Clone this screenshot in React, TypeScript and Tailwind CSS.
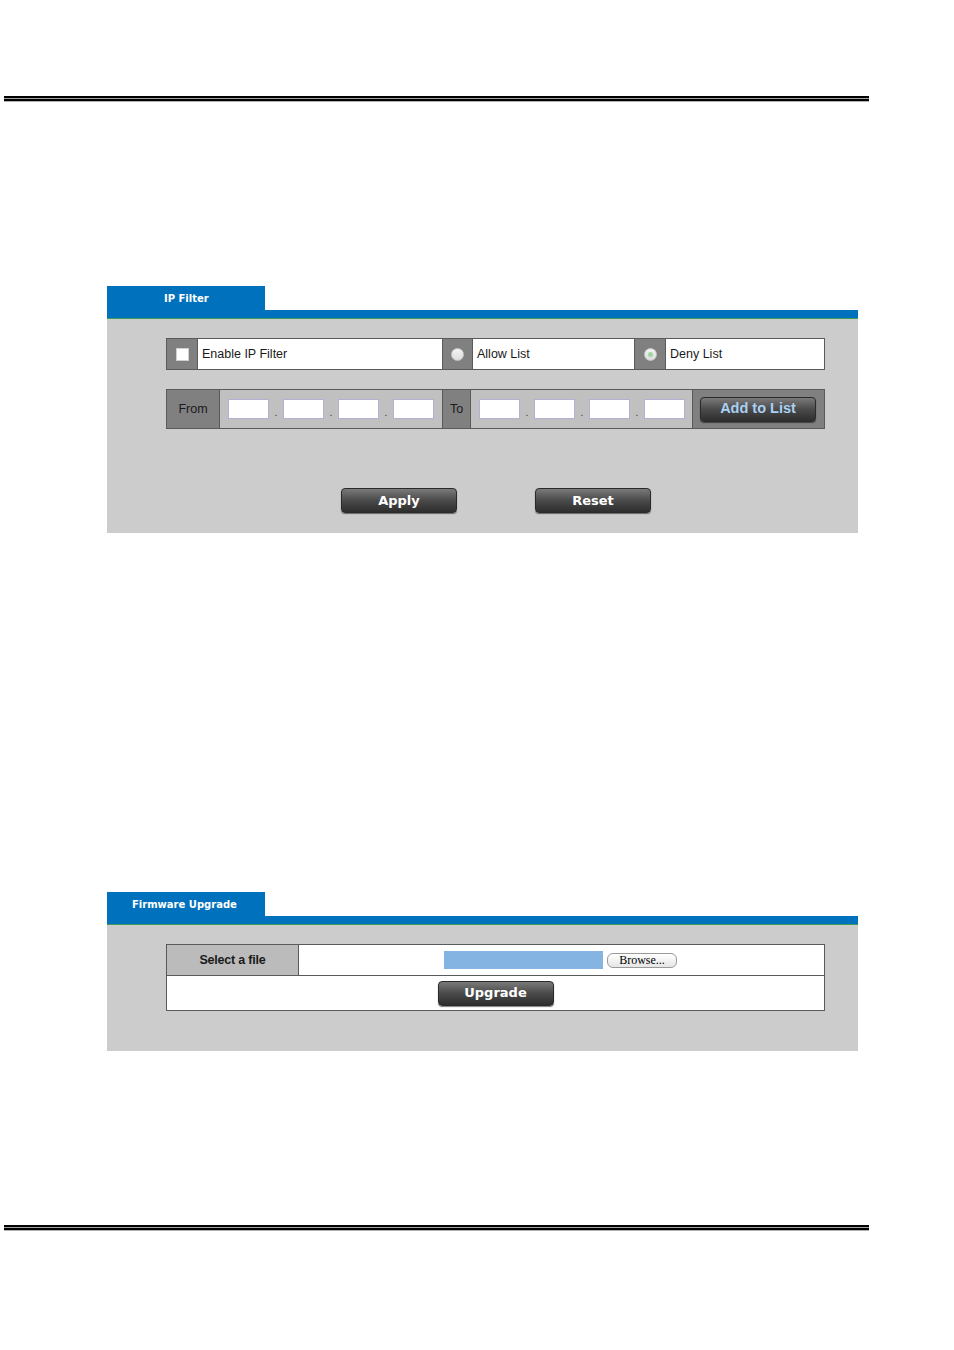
import React from "react";

const sans = { fontFamily: '"Liberation Sans", Arial, sans-serif' };
const bold = { fontFamily: '"DejaVu Sans", Verdana, sans-serif' };

function Rule() {
  return (
    <div className="ml-[4px] w-[865px]">
      <div className="h-[2px] bg-black" />
      <div className="h-[1px] bg-[#a0a0a0]" />
      <div className="h-[2px] bg-black" />
      <div className="h-[1px] bg-[#b0b0b0]" />
    </div>
  );
}

function Tab({ title, indent }: { title: string; indent: string }) {
  return (
    <div>
      <div className="h-[24px] w-[158px] bg-[#0071bc] flex items-center">
        <span className={`${indent} text-white font-bold text-[10px]`} style={bold}>
          {title}
        </span>
      </div>
      <div className="h-[8px] bg-[#0071bc]" />
      <div className="h-[1px] bg-[#3f9b57]" />
    </div>
  );
}

function DarkButton({ label, w, light }: { label: string; w: string; light?: boolean }) {
  return (
    <div
      className={`${w} h-[25px] rounded-[4px] border border-[#2a2a2a] bg-gradient-to-b from-[#7a7a7a] via-[#4a4a4a] to-[#2e2e2e] shadow-[0_1px_1px_rgba(0,0,0,0.5)] flex items-center justify-center`}
    >
      {light ? (
        <span className="font-bold text-[14.5px] text-[#a9d1f2]" style={sans}>
          {label}
        </span>
      ) : (
        <span className="font-bold text-[13px] text-white" style={bold}>
          {label}
        </span>
      )}
    </div>
  );
}

function IpBox() {
  return <div className="w-[41px] h-[20px] bg-white border border-[#b4b0d4]" />;
}

function IpGroup() {
  return (
    <div className="flex items-center pl-[8px]">
      <IpBox />
      <span className="w-[14px] text-center text-[10px] text-[#333] pt-[6px]">.</span>
      <IpBox />
      <span className="w-[14px] text-center text-[10px] text-[#333] pt-[6px]">.</span>
      <IpBox />
      <span className="w-[14px] text-center text-[10px] text-[#333] pt-[6px]">.</span>
      <IpBox />
    </div>
  );
}

function Radio({ dot }: { dot?: boolean }) {
  return (
    <div className="w-[13px] h-[13px] rounded-full bg-gradient-to-b from-[#f4f4f4] to-[#dcdcdc] border border-[#c8c8c8] flex items-center justify-center">
      {dot && <div className="w-[5px] h-[5px] rounded-full bg-[#9ed89e]" />}
    </div>
  );
}

export default function App() {
  return (
    <div className="w-[954px] h-[1350px] bg-white" style={sans}>
      <div className="h-[96px]" />
      <Rule />

      {/* IP Filter */}
      <div className="ml-[107px] w-[751px] mt-[184px]">
        <Tab title="IP Filter" indent="ml-[57px]" />
        <div className="bg-[#cccccc] h-[214px] pt-[19px] pl-[59px]">
          <div className="w-[659px] h-[32px] border border-[#5a5a5a] flex text-[12.5px] text-[#1a1a1a]">
            <div className="w-[31px] bg-[#808080] flex items-center justify-center border-r border-[#5a5a5a]">
              <div className="w-[13px] h-[13px] bg-white border border-[#cfcfcf]" />
            </div>
            <div className="w-[245px] bg-white flex items-center pl-[4px] border-r border-[#5a5a5a]">
              Enable IP Filter
            </div>
            <div className="w-[30px] bg-[#808080] flex items-center justify-center border-r border-[#5a5a5a]">
              <Radio />
            </div>
            <div className="w-[162px] bg-white flex items-center pl-[4px] border-r border-[#5a5a5a]">
              Allow List
            </div>
            <div className="w-[31px] bg-[#808080] flex items-center justify-center border-r border-[#5a5a5a]">
              <Radio dot />
            </div>
            <div className="flex-1 bg-white flex items-center pl-[4px]">Deny List</div>
          </div>

          <div className="mt-[19px] w-[659px] h-[40px] border border-[#5a5a5a] flex text-[12.5px] text-[#1a1a1a]">
            <div className="w-[53px] bg-[#808080] flex items-center justify-center border-r border-[#5a5a5a]">
              From
            </div>
            <div className="w-[223px] bg-[#c0c0c0] flex items-center border-r border-[#5a5a5a]">
              <IpGroup />
            </div>
            <div className="w-[28px] bg-[#808080] flex items-center justify-center border-r border-[#5a5a5a]">
              To
            </div>
            <div className="w-[222px] bg-[#c0c0c0] flex items-center border-r border-[#5a5a5a]">
              <IpGroup />
            </div>
            <div className="flex-1 bg-[#808080] flex items-center pl-[7px]">
              <DarkButton label="Add to List" w="w-[116px]" light />
            </div>
          </div>

          <div className="mt-[59px] flex pl-[175px] gap-[78px]">
            <DarkButton label="Apply" w="w-[116px]" />
            <DarkButton label="Reset" w="w-[116px]" />
          </div>
        </div>
      </div>

      {/* Firmware Upgrade */}
      <div className="ml-[107px] w-[751px] mt-[359px]">
        <Tab title="Firmware Upgrade" indent="ml-[25px]" />
        <div className="bg-[#cccccc] h-[126px] pt-[19px] pl-[59px]">
          <div className="w-[659px] border border-[#5a5a5a] bg-white">
            <div className="h-[31px] flex border-b border-[#5a5a5a]">
              <div className="w-[132px] bg-[#bbbbbb] border-r border-[#5a5a5a] flex items-center justify-center text-[12.5px] text-[#1a1a1a] font-bold tracking-[-0.2px]">
                Select a file
              </div>
              <div className="flex-1 flex items-center pl-[145px]">
                <div className="w-[159px] h-[18px] bg-[#84b4e2]" />
                <div
                  className="ml-[4px] w-[70px] h-[15px] rounded-[6px] border border-[#9a9a9a] bg-gradient-to-b from-white to-[#e6e6e6] flex items-center justify-center text-[12px] text-black leading-none"
                  style={{ fontFamily: '"Liberation Serif", "Times New Roman", serif' }}
                >
                  Browse...
                </div>
              </div>
            </div>
            <div className="h-[34px] flex items-center justify-center">
              <DarkButton label="Upgrade" w="w-[116px]" />
            </div>
          </div>
        </div>
      </div>

      <div className="h-[174px]" />
      <Rule />
    </div>
  );
}
